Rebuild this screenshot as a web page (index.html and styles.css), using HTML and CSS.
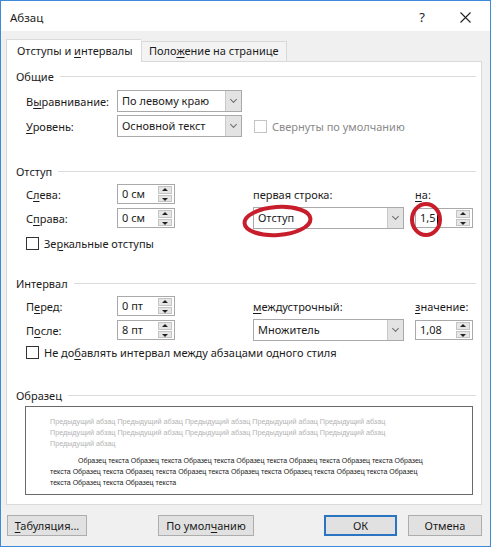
FILE: index.html
```html
<!DOCTYPE html>
<html>

<head>
    <title>Абзац</title>
    <link rel="stylesheet" href="styles.css">
</head>

<body>
    <div class="window">
        <div class="titlebar">
            <span class="title">Абзац</span>
            <span class="help">?</span>
            <span class="close">
                <svg width="11" height="11" viewBox="0 0 11 11"><path d="M0.5 0.5L10.5 10.5M10.5 0.5L0.5 10.5" stroke="#222" stroke-width="1.1" fill="none"/></svg>
            </span>
        </div>

        <div class="client">
            <div class="tabs">
                <div class="tab active">Отступы и <u>и</u>нтервалы</div>
                <div class="tab">Поло<u>ж</u>ение на странице</div>
            </div>

            <div class="panel">
                <!-- General -->
                <div class="group-title">Общие</div>
                <div class="grid grid-general">
                    <label>В<u>ы</u>равнивание:</label>
                    <div class="select w-short">По левому краю<span class="drop"></span></div>
                    <span></span>
                    <span></span>

                    <label><u>У</u>ровень:</label>
                    <div class="select w-short">Основной текст<span class="drop"></span></div>
                    <div class="check disabled span-2"><span class="box"></span>Свернуты по умолчанию</div>
                </div>

                <!-- Indent -->
                <div class="group-title gap-indent">Отступ</div>
                <div class="grid grid-pair">
                    <label>С<u>л</u>ева:</label>
                    <div class="spin">0 см<span class="arrows"><i class="up"></i><i class="down"></i></span></div>
                    <label>первая строка:</label>
                    <label><u>н</u>а:</label>

                    <label>С<u>п</u>рава:</label>
                    <div class="spin">0 см<span class="arrows"><i class="up"></i><i class="down"></i></span></div>
                    <div class="select w-long">Отступ<span class="drop"></span></div>
                    <div class="spin">1,5<span class="caret"></span><span class="arrows"><i class="up"></i><i class="down"></i></span></div>
                </div>
                <div class="check row-check"><span class="box"></span>Зе<u>р</u>кальные отступы</div>

                <!-- Spacing -->
                <div class="group-title gap-spacing">Интервал</div>
                <div class="grid grid-pair">
                    <label>П<u>е</u>ред:</label>
                    <div class="spin">0 пт<span class="arrows"><i class="up"></i><i class="down"></i></span></div>
                    <label><u>м</u>еждустрочный:</label>
                    <label><u>з</u>начение:</label>

                    <label>П<u>о</u>сле:</label>
                    <div class="spin">8 пт<span class="arrows"><i class="up"></i><i class="down"></i></span></div>
                    <div class="select w-long">Множитель<span class="drop"></span></div>
                    <div class="spin">1,08<span class="arrows"><i class="up"></i><i class="down"></i></span></div>
                </div>
                <div class="check row-check-2"><span class="box"></span>Не до<u>б</u>авлять интервал между абзацами одного стиля</div>

                <!-- Preview -->
                <div class="group-title gap-preview">Образец</div>
                <div class="preview">
                    <div class="prev-line">Предыдущий абзац Предыдущий абзац Предыдущий абзац Предыдущий абзац Предыдущий абзац</div>
                    <div class="prev-line">Предыдущий абзац Предыдущий абзац Предыдущий абзац Предыдущий абзац Предыдущий абзац</div>
                    <div class="prev-line">Предыдущий абзац</div>
                    <div class="sample-line first">Образец текста Образец текста Образец текста Образец текста Образец текста Образец текста Образец</div>
                    <div class="sample-line">текста Образец текста Образец текста Образец текста Образец текста Образец текста Образец текста Образец</div>
                    <div class="sample-line">текста Образец текста Образец текста</div>
                </div>
            </div>

            <div class="buttons">
                <button class="btn btn-tabs"><u>Т</u>абуляция...</button>
                <button class="btn btn-default">По умол<u>ч</u>анию</button>
                <button class="btn btn-ok">ОК</button>
                <button class="btn btn-cancel">Отмена</button>
            </div>
        </div>

        <!-- red marks drawn over the dialog -->
        <svg class="marks" width="491" height="547" viewBox="0 0 491 547">
            <ellipse cx="277.5" cy="221" rx="33" ry="14" transform="rotate(-4 277.5 221)" fill="none" stroke="#c81e2c" stroke-width="4"/>
            <ellipse cx="426" cy="219.5" rx="14" ry="15.5" fill="none" stroke="#c81e2c" stroke-width="4"/>
        </svg>
    </div>
</body>
</html>
```

FILE: styles.css
```css
* {
    box-sizing: border-box;
}

body {
    margin: 0;
    font-family: "Noto Sans", "Open Sans", sans-serif;
    font-size: 11px;
    color: #1b1b1b;
    background: #fff;
}

u {
    text-decoration-thickness: 1px;
    text-underline-offset: 2px;
}

.window {
    position: relative;
    width: 491px;
    height: 547px;
    border: 1px solid #3d8bd8;
    background: #f0f0f0;
    display: flex;
    flex-direction: column;
}

.titlebar {
    height: 30px;
    background: #fff;
    display: flex;
    align-items: center;
    padding-left: 9px;
    padding-top: 2px;
    font-size: 11.5px;
}

.title {
    flex: 1;
}

.help {
    font-size: 13px;
    margin-right: 35px;
}

.close {
    display: flex;
    margin-right: 19px;
}

.client {
    flex: 1;
    padding: 8px 8px 0 5px;
}

.tabs {
    display: flex;
    align-items: flex-end;
    height: 22px;
}

.tab {
    height: 20px;
    line-height: 18px;
    border: 1px solid #d9d9d9;
    border-bottom: none;
    background: #f3f3f3;
    padding-left: 7px;
    width: 146px;
    white-space: nowrap;
}

.tab.active {
    height: 23px;
    line-height: 22px;
    background: #fff;
    border-right: none;
    width: 135px;
    padding-left: 10px;
    margin-bottom: -1px;
    position: relative;
    z-index: 1;
}

.panel {
    height: 444px;
    border: 1px solid #d9d9d9;
    background: #fff;
    padding: 6px 5px 0 9px;
}

.group-title {
    display: flex;
    align-items: center;
    height: 16px;
}

.group-title::after {
    content: "";
    flex: 1;
    height: 1px;
    background: #dcdcdc;
    margin-left: 6px;
}

.gap-indent {
    margin-top: 26px;
}

.gap-spacing {
    margin-top: 25px;
}

.gap-preview {
    margin-top: 28px;
}

.grid {
    display: grid;
    margin-left: 10px;
    grid-template-columns: 91px 136px 162px 58px;
    row-gap: 3px;
    align-items: center;
}

.grid-general {
    margin-top: 6px;
    grid-template-rows: 22px 22px;
}

.grid-pair {
    margin-top: 5px;
    grid-template-rows: 20px 22px;
}

.span-2 {
    grid-column: span 2;
}

.select {
    position: relative;
    height: 22px;
    line-height: 20px;
    border: 1px solid #a9a9a9;
    background: #fff;
    padding-left: 4px;
}

.w-short {
    width: 125px;
}

.w-long {
    width: 151px;
}

.drop {
    position: absolute;
    top: 0;
    right: 0;
    width: 16px;
    height: 20px;
    background: #e3e3e3;
    border-left: 1px solid #c9c9c9;
}

.drop::after {
    content: "";
    position: absolute;
    left: 5px;
    top: 6px;
    width: 4px;
    height: 4px;
    border-right: 1px solid #6d6d6d;
    border-bottom: 1px solid #6d6d6d;
    transform: rotate(45deg);
}

.spin {
    position: relative;
    width: 58px;
    height: 20px;
    line-height: 18px;
    border: 1px solid #a9a9a9;
    background: #fff;
    padding-left: 4px;
}

.caret {
    display: inline-block;
    width: 1px;
    height: 13px;
    background: #000;
    vertical-align: -3px;
    margin-left: 1px;
}

.arrows {
    position: absolute;
    top: 1px;
    right: 2px;
    width: 14px;
    height: 16px;
    display: flex;
    flex-direction: column;
    gap: 1px;
}

.arrows i {
    flex: 1;
    background: #e6e6e6;
    border: 1px solid #c4c4c4;
    position: relative;
}

.arrows i::after {
    content: "";
    position: absolute;
    left: 3px;
    border-left: 3px solid transparent;
    border-right: 3px solid transparent;
}

.arrows .up::after {
    top: 1px;
    border-bottom: 3px solid #222;
}

.arrows .down::after {
    top: 2px;
    border-top: 3px solid #222;
}

.check {
    display: flex;
    align-items: center;
    height: 14px;
    white-space: nowrap;
}

.box {
    width: 13px;
    height: 13px;
    border: 1px solid #333;
    background: #fff;
    margin-right: 5px;
    flex-shrink: 0;
}

.check.disabled {
    color: #8a8a8a;
    margin-left: 1px;
}

.check.disabled .box {
    border-color: #c4c4c4;
}

.row-check {
    margin: 7px 0 0 10px;
}

.row-check-2 {
    margin: 4px 0 0 10px;
}

.preview {
    margin: 3px 0 0 9px;
    width: 448px;
    height: 89px;
    border: 1px solid #6a6a6a;
    background: #fff;
    padding: 9px 0 0 24px;
    font-family: "Liberation Sans", Arial, sans-serif;
    font-size: 7px;
    line-height: 11px;
    white-space: nowrap;
}

.prev-line {
    color: #b3b3b3;
    font-size: 7.2px;
}

.sample-line {
    color: #222;
}

.sample-line.first {
    margin-top: 6px;
    padding-left: 28px;
}

.buttons {
    display: flex;
    margin-top: 10px;
    padding-left: 1px;
}

.btn {
    height: 21px;
    font-family: "Noto Sans", "Open Sans", sans-serif;
    font-size: 11px;
    color: #1b1b1b;
    background: #e1e1e1;
    border: 1px solid #adadad;
    padding: 0;
}

.btn-tabs {
    width: 80px;
}

.btn-default {
    width: 96px;
    margin-left: 71px;
}

.btn-ok {
    width: 73px;
    margin-left: auto;
    border: 2px solid #2a74c2;
}

.btn-cancel {
    width: 74px;
    margin-left: 11px;
}

.marks {
    position: absolute;
    top: -1px;
    left: -1px;
    pointer-events: none;
}
```
